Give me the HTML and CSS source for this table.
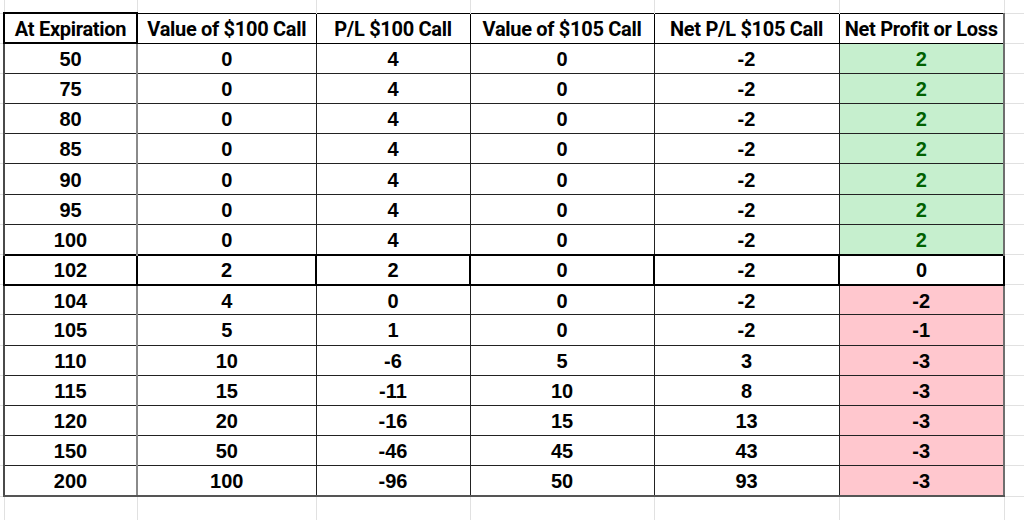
FILE: index.html
```html
<!DOCTYPE html>
<html lang="en">
<head>
<meta charset="utf-8">
<title>Bull Call Spread P/L</title>
<link rel="stylesheet" href="styles.css">
</head>
<body>
<table class="sheet">
  <colgroup>
    <col class="w-gl">
    <col class="w-c1">
    <col class="w-c2">
    <col class="w-c3">
    <col class="w-c4">
    <col class="w-c5">
    <col class="w-c6">
    <col class="w-gr">
  </colgroup>
  <tr class="gtop">
    <td class="corner"></td>
    <td class="gv"></td><td class="gv"></td><td class="gv"></td><td class="gv"></td><td class="gv"></td><td class="gv"></td>
    <td class="corner"></td>
  </tr>
  <tr class="head">
    <td class="gh"></td>
    <th class="c1 first">At Expiration</th>
    <th>Value of $100 Call</th>
    <th>P/L $100 Call</th>
    <th>Value of $105 Call</th>
    <th>Net P/L $105 Call</th>
    <th class="c6">Net Profit or Loss</th>
    <td class="gh"></td>
  </tr>
  <tr class="row"><td class="gh"></td><td class="c1">50</td><td>0</td><td>4</td><td>0</td><td>-2</td><td class="c6 gain">2</td><td class="gh"></td></tr>
  <tr class="row"><td class="gh"></td><td class="c1">75</td><td>0</td><td>4</td><td>0</td><td>-2</td><td class="c6 gain">2</td><td class="gh"></td></tr>
  <tr class="row"><td class="gh"></td><td class="c1">80</td><td>0</td><td>4</td><td>0</td><td>-2</td><td class="c6 gain">2</td><td class="gh"></td></tr>
  <tr class="row"><td class="gh"></td><td class="c1">85</td><td>0</td><td>4</td><td>0</td><td>-2</td><td class="c6 gain">2</td><td class="gh"></td></tr>
  <tr class="row"><td class="gh"></td><td class="c1">90</td><td>0</td><td>4</td><td>0</td><td>-2</td><td class="c6 gain">2</td><td class="gh"></td></tr>
  <tr class="row"><td class="gh"></td><td class="c1">95</td><td>0</td><td>4</td><td>0</td><td>-2</td><td class="c6 gain">2</td><td class="gh"></td></tr>
  <tr class="row"><td class="gh"></td><td class="c1">100</td><td>0</td><td>4</td><td>0</td><td>-2</td><td class="c6 gain">2</td><td class="gh"></td></tr>
  <tr class="row mark"><td class="gh"></td><td class="c1">102</td><td>2</td><td>2</td><td>0</td><td>-2</td><td class="c6">0</td><td class="gh"></td></tr>
  <tr class="row"><td class="gh"></td><td class="c1">104</td><td>4</td><td>0</td><td>0</td><td>-2</td><td class="c6 loss">-2</td><td class="gh"></td></tr>
  <tr class="row"><td class="gh"></td><td class="c1">105</td><td>5</td><td>1</td><td>0</td><td>-2</td><td class="c6 loss">-1</td><td class="gh"></td></tr>
  <tr class="row"><td class="gh"></td><td class="c1">110</td><td>10</td><td>-6</td><td>5</td><td>3</td><td class="c6 loss">-3</td><td class="gh"></td></tr>
  <tr class="row"><td class="gh"></td><td class="c1">115</td><td>15</td><td>-11</td><td>10</td><td>8</td><td class="c6 loss">-3</td><td class="gh"></td></tr>
  <tr class="row"><td class="gh"></td><td class="c1">120</td><td>20</td><td>-16</td><td>15</td><td>13</td><td class="c6 loss">-3</td><td class="gh"></td></tr>
  <tr class="row"><td class="gh"></td><td class="c1">150</td><td>50</td><td>-46</td><td>45</td><td>43</td><td class="c6 loss">-3</td><td class="gh"></td></tr>
  <tr class="row last"><td class="gh"></td><td class="c1">200</td><td>100</td><td>-96</td><td>50</td><td>93</td><td class="c6 loss">-3</td><td class="gh"></td></tr>
  <tr class="gbot">
    <td class="corner"></td>
    <td class="gv"></td><td class="gv"></td><td class="gv"></td><td class="gv"></td><td class="gv"></td><td class="gv"></td>
    <td class="corner"></td>
  </tr>
</table>
</body>
</html>
```

FILE: styles.css
```css
html, body {
  margin: 0;
  padding: 0;
  background: #ffffff;
}

.sheet {
  width: 1024px;
  border-collapse: collapse;
  table-layout: fixed;
  color: #000000;
}

.w-gl { width: 4px; }
.w-c1 { width: 133px; }
.w-c2 { width: 179px; }
.w-c3 { width: 154px; }
.w-c4 { width: 184px; }
.w-c5 { width: 185px; }
.w-c6 { width: 165px; }
.w-gr { width: 20px; }

.sheet td,
.sheet th {
  padding: 0;
  text-align: center;
  vertical-align: middle;
}

/* gutters: faint spreadsheet gridlines */
.gtop { height: 13px; }
.gbot { height: 24px; }
.corner { border: none; }
.gv {
  border-left: 1px solid #e1e1e1;
  border-right: 1px solid #e1e1e1;
}
.gh {
  border-top: 1px solid #e1e1e1;
  border-bottom: 1px solid #e1e1e1;
}

/* header row */
.head { height: 30.2px; }
.head th {
  font-family: Roboto, "Liberation Sans", sans-serif;
  font-weight: 700;
  font-size: 20px;
  letter-spacing: -0.3px;
  white-space: nowrap;
  padding-top: 2px;
  border-top: 1px solid #000;
  border-bottom: 1px solid #000;
  border-left: 1px solid #000;
  border-right: 1px solid #000;
}
.head th.first {
  border: 2px solid #000;
}
.head th.c6 {
  border-right: 2px solid #6e6e6e;
}

/* data rows */
.row { height: 30.2px; }
.row td:not(.gh) {
  font-family: "Liberation Sans", Arial, sans-serif;
  font-weight: bold;
  font-size: 20px;
  padding-top: 2px;
  border: 1px solid #222;
}
.row td.c1 {
  border-left: 2px solid #4a4a4a;
  border-right: 2px solid #8a8a8a;
}
.row td.c6 {
  border-right: 2px solid #6e6e6e;
}
.row.last td:not(.gh) {
  border-bottom: 2px solid #555;
}
.row.mark td:not(.gh) {
  border: 2px solid #000;
}

.gain {
  background: #c6efce;
  color: #006100;
}
.loss {
  background: #ffc7ce;
  color: #000;
}
```
